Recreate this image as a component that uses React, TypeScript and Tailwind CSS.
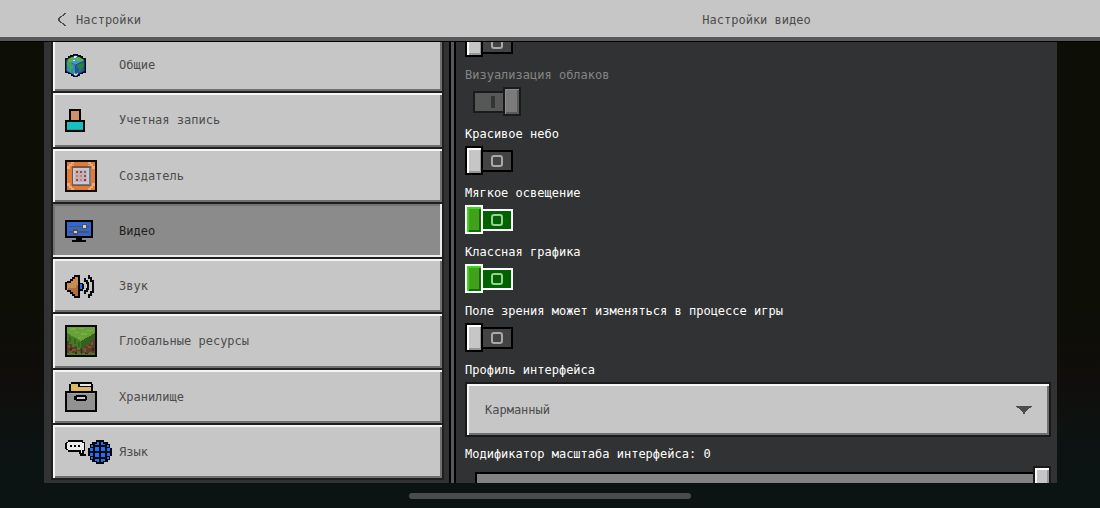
import { useState, type ReactNode } from 'react';
import { clsx } from 'clsx';

function WorldIcon() {
  return (
    <svg width="21" height="23" viewBox="0 0 21 23" aria-hidden="true">
      <path fill="#0a0d10" d="M8 0h5v1h3v1h2v2h3v15h-3v1h-3v2h-2v1H8v-1H6v-2H3v-1H0V4h3V2h2V1h3z" />
      <path fill="#3f98d4" d="M10.5 1.5L19.5 6l-9 5-9-5z" />
      <path fill="#2f86cf" d="M1.5 6l9 5v10.500l-9-4.500z" />
      <path fill="#1d57a6" d="M19.500 6l-9 5v10.500l9-4.500z" />
      <path fill="#58b53c" d="M3 5l4-2 2 1 1 2-3 1-1 2-3-1zM12 4l2-1 5 3-3 2-3-1-2 1z" />
      <path fill="#dfeaf0" d="M9 2h3v1h-1v1H9zM8 6h2v1H8z" />
      <path fill="#4aa83a" d="M2 8l3 1 3 3v2l-2 1v3l-2-2v-3l-2-2zM8 16l2 1v2l-2-1z" />
      <path fill="#2f8234" d="M12 11l4-2 1 1 2-1v3l-2 2-1 3-2 1v-4l-2-1z" />
      <path fill="#d4dce6" d="M9 19l2 1 2-1v1l-2 2-2-1z" />
    </svg>
  );
}

function AccountIcon() {
  return (
    <svg width="20" height="23" viewBox="0 0 20 23" shapeRendering="crispEdges" aria-hidden="true">
      <path fill="#050505" d="M4 0h12v11h4v12H0V11h4z" />
      <path fill="#cf9068" d="M6 2h8v9H6z" />
      <path fill="#18bfc0" d="M2 13h16v8H2z" />
      <path fill="#12a3a5" d="M2 20h16v1H2z" />
    </svg>
  );
}

function CreatorIcon() {
  return (
    <svg width="32" height="32" viewBox="0 0 32 32" shapeRendering="crispEdges" aria-hidden="true">
      <path fill="#120a06" d="M0 0h32v32H0z" />
      <path fill="#dc7c3a" d="M2 2h28v28H2z" />
      <path fill="#eea878" d="M6 2h3v2H6zM4 4h3v2H4zM2 6h3v3H2zM7 5h2v2H7zM23 2h3v2h-3zM25 4h3v2h-3zM27 6h3v3h-3zM23 5h2v2h-2zM2 23h3v3H2zM4 26h3v2H4zM6 28h3v2H6zM27 23h3v3h-3zM25 26h3v2h-3zM23 28h3v2h-3z" />
      <path fill="#7a5540" d="M7 6h19v20H7z" />
      <path fill="#cbc7cf" d="M8 8h16v16H8z" />
      <path fill="#7d7783" d="M24 8h2v17H8v-1h16z" />
      <path fill="#b9b4bf" d="M10 10h12v12H10z" />
      <path fill="#c03844" d="M11 11h2v2h-2zM15 11h2v2h-2zM19 15h2v2h-2zM11 19h2v2h-2z" />
      <path fill="#4a8c48" d="M19 11h2v2h-2z" />
      <path fill="#dc8038" d="M11 15h2v2h-2z" />
      <path fill="#d8787c" d="M15 15h2v2h-2zM15 19h2v2h-2z" />
      <path fill="#a02c40" d="M19 19h2v2h-2z" />
    </svg>
  );
}

function VideoIcon() {
  return (
    <svg width="28" height="22" viewBox="0 0 28 22" shapeRendering="crispEdges" aria-hidden="true">
      <path fill="#050505" d="M0 0h28v18H17v2h4v2H7v-2h4v-2H0z" />
      <path fill="#3566cf" d="M2 2h24v14H2z" />
      <path fill="#4d525c" d="M4 6h20v1H4zM4 11h20v2H4zM17 4h5v5h-5zM8 9h5v6H8z" />
      <path fill="#d0d0d0" d="M18 5h3v3h-3zM9 11h3v2H9z" />
    </svg>
  );
}

function SoundIcon() {
  return (
    <svg width="31" height="23" viewBox="0 0 31 23" aria-hidden="true">
      <path fill="#050505" d="M9 0h6v23H9v-2H7v-2H5v-2H2v-2H0V7h2V6h3V4h2V2h2z" />
      <path fill="#c98a54" d="M10 2h3v19h-3v-2H8v-2H6v-2H2V8h4V6h2V4h2z" />
      <path fill="#ab6f3f" d="M3 13h8v-3h2v11h-3v-2H8v-2H6v-2H3z" />
      <path fill="#050505" d="M15 8h3v1h1v5h-1v2h-3z" />
      <path fill="#1674ff" d="M15 9h2v5h-2z" />
      <path fill="none" stroke="#0a0a0a" strokeWidth="2" d="M19 4h1v2h2v2h1v6h-1v2h-2v2h-1" />
      <path fill="none" stroke="#0a0a0a" strokeWidth="2" d="M23 1h1v2h2v3h2v11h-2v3h-2v2h-1" />
    </svg>
  );
}

function GrassIcon() {
  return (
    <svg width="32" height="32" viewBox="0 0 32 32" shapeRendering="crispEdges" aria-hidden="true">
      <path fill="#0a0a06" d="M0 0h32v32H0z" />
      <path fill="#457a26" d="M2 2h28v28H2z" />
      <path fill="#67a138" d="M2 2h28v6l-14 8L2 8z" />
      <path fill="#76b043" d="M5 3h6v2H5zM14 3h5v1h-5zM22 5h6v1h-6zM9 7h5v1H9zM16 8h6v2h-6zM13 12h5v1h-5z" />
      <path fill="#34611d" d="M16 16l14-8v10l-4 4-4-2-6 6z" />
      <path fill="#5a3e2a" d="M2 16h2v3h3v3h3v-1h2v4h3v-2h2v2h2v-4h4v-2h2v-3h3v-2h2v14H2z" />
      <path fill="#7a543a" d="M3 20h2v3H3zM7 24h4v2H7zM4 26h3v2H4zM12 26h3v2h-3zM19 23h2v4h-2zM23 21h3v2h-3zM26 17h2v3h-2zM24 27h3v2h-3z" />
      <path fill="#3a281d" d="M5 23h2v2H5zM10 27h2v2h-2zM16 24h1v5h-1zM20 28h3v1h-3zM27 23h2v3h-2z" />
      <path fill="#35651e" d="M4 12h2v5H4zM9 14h2v5H9zM13 17h2v5h-2z" />
    </svg>
  );
}

function StorageIcon() {
  return (
    <svg width="32" height="30" viewBox="0 0 32 30" shapeRendering="crispEdges" aria-hidden="true">
      <path fill="#050505" d="M6 0h21v2h1v7h4v21H0V9h4V2h2z" />
      <path fill="#dcb95c" d="M6 2h7v3h13v4H6z" />
      <path fill="#e9e9e9" d="M15 2h11v2H15z" />
      <path fill="#929292" d="M2 11h28v17H2z" />
      <path fill="#a4a4a4" d="M2 11h28v1H2z" />
      <path fill="#050505" d="M11 13h10v1h1v4h-1v1H11v-1H9v-4h2z" />
      <path fill="#c6c6c6" d="M12 15h8v2h-8z" />
    </svg>
  );
}

function LanguageIcon() {
  return (
    <svg width="47" height="24" viewBox="0 0 47 24" shapeRendering="crispEdges" aria-hidden="true">
      <path fill="#050505" d="M3 0h15v2h2v9h-1v3h2v2h-6v-2h-1v-2H3v-2H1V9H0V3h1V2h2z" />
      <path fill="#ececec" d="M3 2h14v1h2v7h-2v3h-1v-3H3V9H2V3h1z" />
      <path fill="#050505" d="M5 5h2v2H5zM9 5h2v2H9zM13 5h2v2h-2z" />
      <path fill="#050505" d="M31 0h8v2h4v2h2v4h2v8h-2v4h-2v2h-4v2h-8v-2h-4v-2h-2v-4h-2V8h2V4h2V2h4z" />
      <path
        fill="#1674ff"
        d="M32 2h2v3h-4V4h2zM36 2h2v2h2v1h-4zM26 5h2v2h-2zM42 5h2v2h-2zM30 7h4v4h-4zM36 7h4v4h-4zM25 8h3v3h-3zM42 8h3v3h-3zM25 13h3v3h-3zM30 13h4v4h-4zM36 13h4v4h-4zM42 13h3v3h-3zM26 17h2v2h-2zM42 17h2v2h-2zM30 19h4v3h-2v-1h-2zM36 19h4v2h-2v1h-2z"
      />
    </svg>
  );
}

const sections: { title: string; icon: ReactNode }[] = [
  { title: 'Общие', icon: <WorldIcon /> },
  { title: 'Учетная запись', icon: <AccountIcon /> },
  { title: 'Создатель', icon: <CreatorIcon /> },
  { title: 'Видео', icon: <VideoIcon /> },
  { title: 'Звук', icon: <SoundIcon /> },
  { title: 'Глобальные ресурсы', icon: <GrassIcon /> },
  { title: 'Хранилище', icon: <StorageIcon /> },
  { title: 'Язык', icon: <LanguageIcon /> },
];

interface ToggleProps {
  label?: string;
  defaultOn?: boolean;
  active?: boolean;
  disabled?: boolean;
}

function Toggle({ label, defaultOn = false, active = false, disabled = false }: ToggleProps) {
  const [on, setOn] = useState(defaultOn);

  const knob = (
    <span
      className={clsx(
        'h-[29px] w-[18px] border-2',
        active && 'border-white bg-[#43a01c] shadow-[inset_2px_2px_0_#35d81c,inset_-2px_-2px_0_#0b7006]',
        disabled && 'border-[#1b1b1c] bg-[#7b7b7b] shadow-[inset_1px_1px_0_#8e8e8e,inset_-2px_-2px_0_#5a5a5a]',
        !active && !disabled && 'border-black bg-[#c6c6c6] shadow-[inset_2px_2px_0_#ffffff,inset_-1px_-2px_0_#969696]'
      )}
    />
  );

  return (
    <label className="mb-[9px] flex flex-col items-start gap-[3px]">
      {label && <span className={clsx('leading-[18px]', disabled ? 'text-[#858585]' : 'text-white')}>{label}</span>}
      <input type="checkbox" className="sr-only" checked={on} disabled={disabled} onChange={() => setOn(!on)} />
      <span className={clsx('flex items-center', on && 'pl-2')}>
        {!on && knob}
        <span
          className={clsx(
            'flex h-[22px] w-[30px] items-center border-y-2',
            on ? 'justify-end border-l-2 pr-2' : 'border-r-2 pl-2',
            active && 'border-white bg-[#006200]',
            disabled && 'border-[#1b1b1c] bg-[#565858]',
            !active && !disabled && 'border-black bg-[#434343]'
          )}
        >
          {on ? (
            <span className="h-3 w-1 bg-[#333435]" />
          ) : (
            <span className={clsx('size-3 rounded-[3px] border-2', active ? 'border-[#9ccd97]' : 'border-[#a8a8a8]')} />
          )}
        </span>
        {on && knob}
      </span>
    </label>
  );
}

export default function App() {
  const [section, setSection] = useState('Видео');
  const [scale, setScale] = useState(0);

  return (
    <div className="flex h-screen flex-col overflow-hidden bg-[#0b1312] font-['DejaVu_Sans_Mono','Liberation_Mono',monospace] text-[12px] text-[#4c4c4c]">
      <header className="grid h-[41px] shrink-0 grid-cols-[412fr_601fr] items-center border-b-4 border-[#58585a] bg-[#c6c6c6] pt-[3px] pr-[43px] pl-[44px]">
        <button className="ml-3.5 flex items-center gap-2.5">
          <svg width="8" height="13" viewBox="0 0 8 13" className="-mt-0.5" shapeRendering="crispEdges" aria-hidden="true">
            <path fill="#4c4c4c" d="M6 0h2v1H6zM5 1h2v1H5zM4 2h2v1H4zM2 3h2v1H2zM1 4h2v1H1zM0 5h2v3H0zM1 8h2v1H1zM2 9h2v1H2zM4 10h2v1H4zM5 11h2v1H5zM6 12h2v1H6z" />
          </svg>
          Настройки
        </button>
        <h1 className="text-center">Настройки видео</h1>
      </header>

      <main className="grid min-h-0 flex-1 grid-cols-[412fr_601fr] grid-rows-1 border-t border-black bg-linear-to-b from-[#0d0f07] from-60% via-[#100d0b] via-75% to-[#0b1413] to-95% pr-[43px] pl-[44px]">
        <div className="flex min-h-0 overflow-hidden bg-[#313233] pl-[7px]">
          <nav className="-mt-1 mb-[3px] flex flex-1 flex-col border-x-2 border-[#1e1e1f] bg-[#1e1e1f]">
            {sections.map(({ title, icon }) => (
              <button
                key={title}
                onClick={() => setSection(title)}
                className={clsx(
                  'flex min-h-0 flex-1 items-center border-b-2 border-[#1e1e1f] pt-px pl-3 text-left',
                  section === title
                    ? 'bg-[#8b8b8b] text-[#1e1e1f] shadow-[inset_-2px_-2px_0_#ebebeb,inset_2px_2px_0_#737373]'
                    : 'bg-[#c6c6c6] shadow-[inset_2px_2px_0_#f4f4f4,inset_-2px_-2px_0_#6f6f6f]'
                )}
              >
                <span className="w-[54px] shrink-0">{icon}</span>
                {title}
              </button>
            ))}
          </nav>
          <div className="ml-[5px] w-[7px] border-x-2 border-black bg-[#58585a]" />
        </div>

        <section className="min-h-0 overflow-hidden bg-[#313233] pr-1.5 pl-[9px]">
          <div className="-mt-[14px]">
            <Toggle />
            <Toggle label="Визуализация облаков" defaultOn disabled />
            <Toggle label="Красивое небо" />
            <Toggle label="Мягкое освещение" active />
            <Toggle label="Классная графика" active />
            <Toggle label="Поле зрения может изменяться в процессе игры" />

            <label htmlFor="profile" className="block leading-[18px] text-white">
              Профиль интерфейса
            </label>
            <div className="relative mt-[3px] mb-2">
              <select
                id="profile"
                className="block h-[55px] w-full appearance-none border-2 border-[#1a1a1b] bg-[#c6c6c6] pl-[18px] shadow-[inset_2px_2px_0_#f7f7f7,inset_-2px_-2px_0_#6f6f6f]"
              >
                <option>Карманный</option>
                <option>Классический</option>
              </select>
              <svg width="16" height="8" viewBox="0 0 16 8" className="pointer-events-none absolute top-6 right-[19px]" aria-hidden="true">
                <path fill="#4c4c4c" d="M0 0h16v1h-1v1h-2v1h-1v1h-1v1h-1v1H9v2H7V6H6V5H5V4H4V3H3V2H1V1H0z" />
              </svg>
            </div>

            <label htmlFor="scale" className="block leading-[18px] text-white">
              Модификатор масштаба интерфейса: {scale}
            </label>
            <div className="mt-[3px] pl-2.5">
              <input
                id="scale"
                type="range"
                min={-2}
                max={0}
                value={scale}
                onChange={(e) => setScale(Number(e.target.value))}
                className="block h-[29px] w-full appearance-none bg-transparent [&::-webkit-slider-runnable-track]:h-[17px] [&::-webkit-slider-runnable-track]:border-2 [&::-webkit-slider-runnable-track]:border-r-0 [&::-webkit-slider-runnable-track]:border-black [&::-webkit-slider-runnable-track]:bg-[#828282] [&::-webkit-slider-thumb]:-mt-2 [&::-webkit-slider-thumb]:h-[29px] [&::-webkit-slider-thumb]:w-[18px] [&::-webkit-slider-thumb]:appearance-none [&::-webkit-slider-thumb]:border-2 [&::-webkit-slider-thumb]:border-[#1a1a1b] [&::-webkit-slider-thumb]:bg-[#c6c6c6] [&::-webkit-slider-thumb]:shadow-[inset_2px_2px_0_#ffffff,inset_-2px_-2px_0_#969696]"
              />
            </div>
          </div>
        </section>
      </main>

      <footer className="flex h-[25px] shrink-0 items-center justify-center bg-[#0b1413]">
        <div className="h-1.5 w-[282px] rounded-full bg-[#4a4c4c]" />
      </footer>
    </div>
  );
}
